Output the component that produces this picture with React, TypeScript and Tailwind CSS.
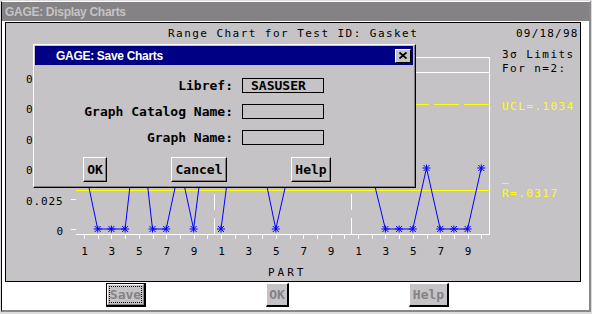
import React from "react";

const MONO = "DejaVu Sans Mono, monospace";

function Star({ x, y }: { x: number; y: number }) {
  return (
    <g stroke="#0000ff" strokeWidth={1}>
      <line x1={x - 4} y1={y} x2={x + 4} y2={y} />
      <line x1={x} y1={y - 3.5} x2={x} y2={y + 3.5} />
      <line x1={x - 3} y1={y - 3} x2={x + 3} y2={y + 3} />
      <line x1={x - 3} y1={y + 3} x2={x + 3} y2={y - 3} />
    </g>
  );
}

function Chart() {
  const groups = [
    [164, 229, 229, 229, 108, 229, 229, 165, 229, 122],
    [229, 125, 150, 163, 229, 168, 140, 120, 150, 110],
    [120, 173, 229, 229, 229, 168, 229, 229, 229, 168],
  ];
  const px = (i: number) => 84 + 13.7 * i;
  const yTicks = [
    { v: "0.125", y: 76.8 },
    { v: "0.100", y: 107.3 },
    { v: "0.075", y: 137.8 },
    { v: "0.050", y: 168.3 },
    { v: "0.025", y: 198.8 },
  ];
  return (
    <svg
      className="absolute inset-0"
      width={574}
      height={258}
      viewBox="6 23 574 258"
      fontFamily={MONO}
      fontSize={11}
    >
      <text x={168} y={37} letterSpacing={1.45} fill="#000">
        Range Chart for Test ID: Gasket
      </text>
      <text x={516} y={37} letterSpacing={1.2} fill="#000">
        09/18/98
      </text>
      <text x={502} y={58} letterSpacing={1.45} fill="#000">
        3σ Limits
      </text>
      <text x={502} y={71.5} letterSpacing={1.45} fill="#000">
        For n=2:
      </text>
      <text x={502} y={110} letterSpacing={1.45} fill="#ffff00">
        UCL=.1034
      </text>
      <line x1={502} y1={183.5} x2={509} y2={183.5} stroke="#ffff00" strokeWidth={1} shapeRendering="crispEdges" />
      <text x={502} y={196.5} letterSpacing={1.45} fill="#ffff00">
        R=.0317
      </text>

      <g stroke="#ffffff" strokeWidth={1} shapeRendering="crispEdges">
        <line x1={76} y1={57.5} x2={489.5} y2={57.5} />
        <line x1={76} y1={72.5} x2={489.5} y2={72.5} />
        <line x1={489.5} y1={57.5} x2={489.5} y2={234.5} />
        <line x1={76} y1={234.5} x2={489.5} y2={234.5} />
        <line x1={214.5} y1={234} x2={214.5} y2={57} strokeDasharray="16 8" />
        <line x1={351.5} y1={234} x2={351.5} y2={57} strokeDasharray="16 8" />
        {yTicks.map((t) => (
          <line key={t.v} x1={71} y1={Math.round(t.y) + 0.5} x2={76} y2={Math.round(t.y) + 0.5} />
        ))}
        <line x1={71} y1={229.5} x2={76} y2={229.5} />
        {Array.from({ length: 30 }, (_, i) => (
          <line key={i} x1={Math.round(px(i)) + 0.5} y1={234} x2={Math.round(px(i)) + 0.5} y2={239} />
        ))}
      </g>

      {yTicks.map((t) => (
        <text key={t.v} x={26} y={t.y + 6} letterSpacing={0.9} fill="#000">
          {t.v}
        </text>
      ))}
      <text x={56.5} y={234.5} fill="#000">
        0
      </text>

      {Array.from({ length: 30 }, (_, i) =>
        i % 2 === 0 ? (
          <text key={i} x={px(i) + 0.5} y={255} textAnchor="middle" fill="#000">
            {(i % 10) + 1}
          </text>
        ) : null
      )}
      <text x={268} y={276} letterSpacing={3} fill="#000">
        PART
      </text>

      <line x1={489} y1={104.5} x2={76} y2={104.5} stroke="#ffff00" strokeWidth={1} strokeDasharray="25 5" shapeRendering="crispEdges" />
      <line x1={76} y1={190.5} x2={489} y2={190.5} stroke="#ffff00" strokeWidth={1} shapeRendering="crispEdges" />

      {groups.map((g, gi) => {
        const pts = g.map((y, i) => ({ x: px(gi * 10 + i), y }));
        return (
          <g key={gi}>
            <polyline
              points={pts.map((p) => `${p.x},${p.y}`).join(" ")}
              fill="none"
              stroke="#0000ff"
              strokeWidth={1}
            />
            {pts.map((p, i) => (
              <Star key={i} x={p.x} y={p.y} />
            ))}
          </g>
        );
      })}
    </svg>
  );
}

function DlgButton({ w, label }: { w: string; label: string }) {
  return (
    <div
      className={`${w} h-[25px] flex items-center justify-center bg-[#c6c3c6] border-t border-l border-t-white border-l-white border-r border-b border-r-black border-b-black shadow-[inset_-1px_-1px_0_#848284] text-black font-bold text-[13px] leading-none`}
    >
      {label}
    </div>
  );
}

function Field({ value }: { value?: string }) {
  return (
    <div className="w-[82px] h-[15px] border border-black flex items-center pl-[8px] font-bold text-[13px] leading-none text-black">
      {value}
    </div>
  );
}

function Row({ label, value }: { label: string; value?: string }) {
  return (
    <div className="flex items-center h-[15px]">
      <div className="w-[198px] text-right font-bold text-[13px] leading-none text-black">{label}</div>
      <div className="ml-[9px]">
        <Field value={value} />
      </div>
    </div>
  );
}

function Dialog() {
  return (
    <div className="absolute left-[27px] top-[21px] w-[383px] h-[144px] bg-[#c6c3c6] border-t border-l border-t-white border-l-white border-r border-b border-r-black border-b-black flex flex-col">
      <div className="flex-1 flex flex-col p-[1px] border-r border-b border-r-[#848284] border-b-[#848284] font-['DejaVu_Sans_Mono',monospace]">
        <div className="h-[19px] bg-[#000084] flex items-center justify-between pl-[21px] pr-[2px]">
          <span className="text-white font-bold text-[12px] tracking-[-0.3px] font-['Liberation_Sans',Arial,sans-serif]">
            GAGE: Save Charts
          </span>
          <div className="w-[16px] h-[14px] bg-[#c6c3c6] border-t border-l border-t-white border-l-white border-r border-b border-r-black border-b-black flex items-center justify-center">
            <svg width="8" height="7" viewBox="0 0 8 7">
              <path d="M0.5 0.5 L7.5 6.5 M7.5 0.5 L0.5 6.5" stroke="#000" strokeWidth={1.8} />
            </svg>
          </div>
        </div>
        <div className="flex flex-col gap-[11px] mt-[13px]">
          <Row label="Libref:" value="SASUSER" />
          <Row label="Graph Catalog Name:" />
          <Row label="Graph Name:" />
        </div>
        <div className="flex gap-[64px] pl-[48px] mt-[12px]">
          <DlgButton w="w-[24px]" label="OK" />
          <DlgButton w="w-[56px]" label="Cancel" />
          <DlgButton w="w-[40px]" label="Help" />
        </div>
      </div>
    </div>
  );
}

function BottomButton({ w, label, focus }: { w: string; label: string; focus?: boolean }) {
  if (focus) {
    return (
      <div className={`${w} h-[24px] border border-black border-r-2 border-b-2 bg-[#c6c3c6]`}>
        <div className="w-full h-full border-t border-l border-t-white border-l-white border-r border-b border-r-[#848284] border-b-[#848284] p-[1px]">
          <div className="w-full h-full border border-dotted border-black flex items-center justify-center text-[#848284] font-bold text-[13px] leading-none">
            {label}
          </div>
        </div>
      </div>
    );
  }
  return (
    <div
      className={`${w} h-[24px] bg-[#c6c3c6] border-t border-l border-t-white border-l-white border-r-2 border-b-2 border-r-black border-b-black flex items-center justify-center text-[#848284] font-bold text-[13px] leading-none`}
    >
      {label}
    </div>
  );
}

export default function App() {
  return (
    <div className="w-[592px] h-[314px] bg-white border-t border-l border-r border-b-2 border-[#dcdcdc] flex flex-col overflow-hidden">
      <div className="flex-1 flex flex-col border-t border-t-white border-l border-l-black border-r-2 border-r-[#888888] border-b-2 border-b-[#888888]">
        <div className="h-[19px] shrink-0 bg-[#848284] flex items-center pl-[3px] text-[#c6c3c6] font-bold text-[12px] tracking-[-0.3px] font-['Liberation_Sans',Arial,sans-serif]">
          GAGE: Display Charts
        </div>
        <div className="mt-[1px] ml-[3px] w-[576px] h-[260px] shrink-0 border border-black bg-[#c6c3c6] relative">
          <Chart />
          <Dialog />
        </div>
        <div className="flex ml-[104px] gap-[120px] mt-[1px] font-['DejaVu_Sans_Mono',monospace]">
          <BottomButton w="w-[40px]" label="Save" focus />
          <BottomButton w="w-[23px]" label="OK" />
          <BottomButton w="w-[40px]" label="Help" />
        </div>
      </div>
    </div>
  );
}
